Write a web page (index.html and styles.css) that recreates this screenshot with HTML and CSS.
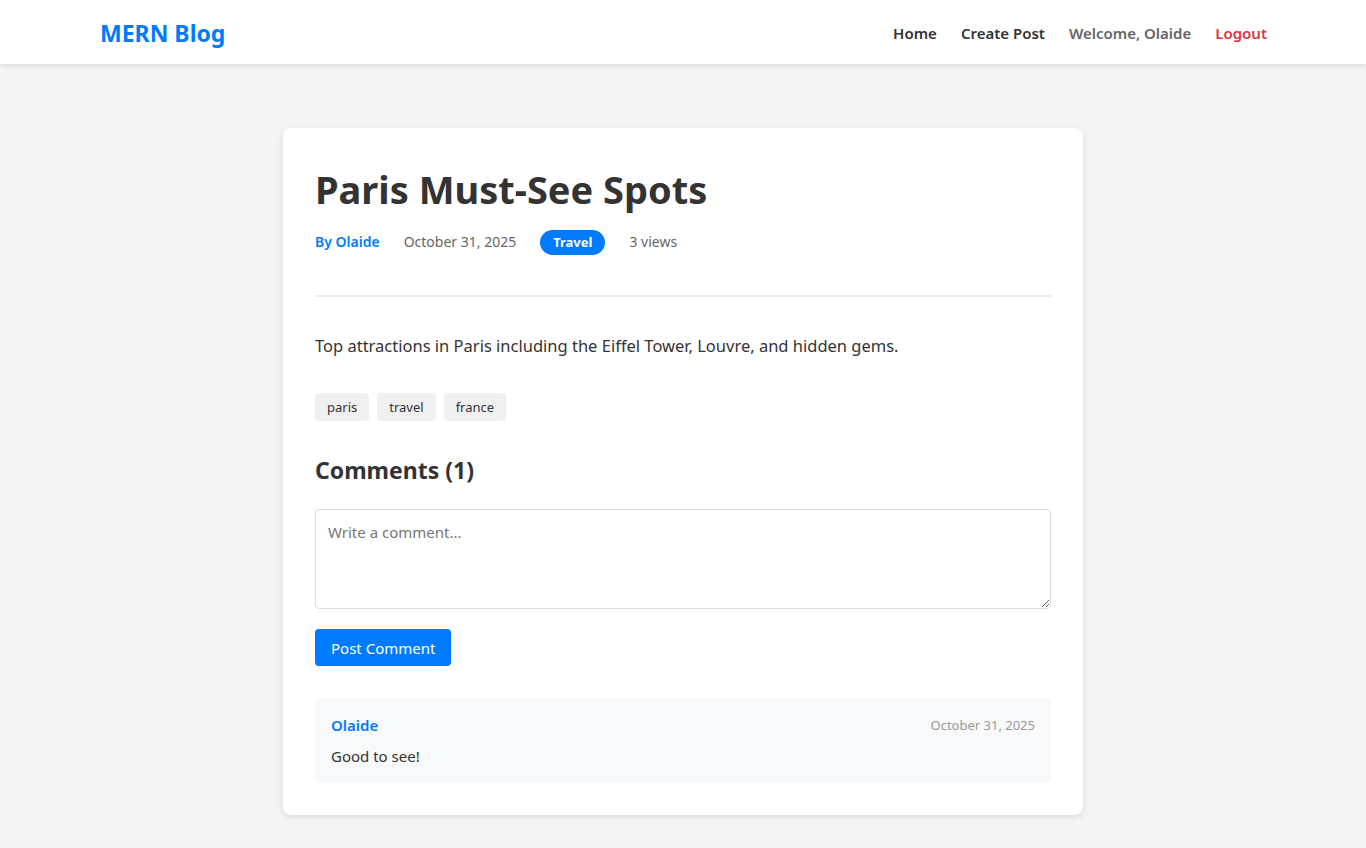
FILE: index.html
```html
<!DOCTYPE html>
<html lang="en">
<head>
<meta charset="utf-8">
<title>Paris Must-See Spots - MERN Blog</title>
<link rel="stylesheet" href="styles.css">
</head>
<body>
<header class="navbar">
  <div class="nav-inner">
    <a class="logo" href="#">MERN Blog</a>
    <nav class="nav-links">
      <a href="#" class="nav-link">Home</a>
      <a href="#" class="nav-link">Create Post</a>
      <span class="nav-welcome">Welcome, Olaide</span>
      <a href="#" class="nav-logout">Logout</a>
    </nav>
  </div>
</header>
<main class="main">
  <article class="post-card">
    <h1 class="post-title">Paris Must-See Spots</h1>
    <div class="post-meta">
      <span class="meta-author">By Olaide</span>
      <span class="meta-date">October 31, 2025</span>
      <span class="meta-badge">Travel</span>
      <span class="meta-views">3 views</span>
    </div>
    <p class="post-content">Top attractions in Paris including the Eiffel Tower, Louvre, and hidden gems.</p>
    <div class="tags">
      <span class="tag">paris</span>
      <span class="tag">travel</span>
      <span class="tag">france</span>
    </div>
    <section class="comments">
      <h2 class="comments-title">Comments (1)</h2>
      <form class="comment-form">
        <textarea class="comment-input" placeholder="Write a comment..."></textarea>
        <button type="button" class="btn-primary">Post Comment</button>
      </form>
      <div class="comment">
        <div class="comment-head">
          <span class="comment-author">Olaide</span>
          <span class="comment-date">October 31, 2025</span>
        </div>
        <p class="comment-text">Good to see!</p>
      </div>
    </section>
  </article>
</main>
</body>
</html>
```
FILE: styles.css
```css
* { box-sizing: border-box; }
html, body { margin: 0; padding: 0; }
body {
  background: #f4f4f4;
  font-family: "Noto Sans", "Open Sans", sans-serif;
  color: #333;
}
a { text-decoration: none; }

.navbar {
  background: #fff;
  height: 64px;
  box-shadow: 0 2px 4px rgba(0,0,0,0.1);
}
.nav-inner {
  max-width: 1200px;
  margin: 0 auto;
  padding: 2px 16px 0 17px;
  height: 100%;
  display: flex;
  align-items: center;
  justify-content: space-between;
}
.logo {
  color: #007bff;
  font-weight: 700;
  font-size: 23px;
}
.nav-links {
  display: flex;
  align-items: center;
  gap: 24px;
  font-size: 15px;
  font-weight: 600;
}
.nav-link { color: #333; }
.nav-welcome { color: #666; }
.nav-logout { color: #dc3545; }

.main {
  padding: 64px 0 32px;
}
.post-card {
  width: 800px;
  margin: 0 auto;
  background: #fff;
  border-radius: 8px;
  box-shadow: 0 2px 6px rgba(0,0,0,0.1);
  padding: 32px;
}
.post-title {
  margin: 0 0 12px;
  font-size: 38px;
  line-height: 58px;
  font-weight: 700;
  color: #333;
}
.post-meta {
  display: flex;
  align-items: center;
  gap: 24px;
  height: 25px;
  font-size: 14px;
  color: #666;
  box-sizing: content-box;
  padding-bottom: 40px;
  border-bottom: 2px solid #eee;
}
.meta-author { color: #007bff; font-weight: 600; margin-top: -3px; }
.meta-date, .meta-views { margin-top: -3px; }
.meta-badge {
  background: #007bff;
  color: #fff;
  font-weight: 700;
  font-size: 13px;
  height: 25px;
  line-height: 25px;
  padding: 0 13px;
  border-radius: 13px;
}
.post-content {
  margin: 35px 0 0;
  font-size: 16.5px;
  line-height: 28px;
  color: #333;
}
.tags {
  display: flex;
  gap: 8px;
  margin-top: 33px;
}
.tag {
  background: #f0f0f0;
  color: #333;
  font-size: 13px;
  height: 28px;
  line-height: 28px;
  padding: 0 12px;
  border-radius: 4px;
}
.comments { margin-top: 35px; }
.comments-title {
  margin: 0 0 24px;
  font-size: 23px;
  line-height: 29px;
  font-weight: 700;
}
.comment-form {
  display: flex;
  flex-direction: column;
  align-items: flex-start;
  gap: 20px;
}
.comment-input {
  width: 100%;
  height: 100px;
  border: 1px solid #ddd;
  border-radius: 4px;
  padding: 12px;
  font-family: inherit;
  font-size: 15px;
  color: #333;
  resize: vertical;
}
.comment-input::placeholder { color: #777; }
.btn-primary {
  background: #007bff;
  color: #fff;
  border: none;
  border-radius: 4px;
  height: 37px;
  padding: 0 16px;
  font-family: inherit;
  font-size: 15px;
}
.comment {
  margin-top: 32px;
  background: #f8f9fa;
  border-radius: 6px;
  padding: 16px;
}
.comment-head {
  display: flex;
  justify-content: space-between;
  align-items: center;
  height: 22px;
}
.comment-author { color: #007bff; font-weight: 600; font-size: 15px; }
.comment-date { color: #999; font-size: 13px; }
.comment-text {
  margin: 9px 0 0;
  font-size: 15px;
  line-height: 22px;
}
```
